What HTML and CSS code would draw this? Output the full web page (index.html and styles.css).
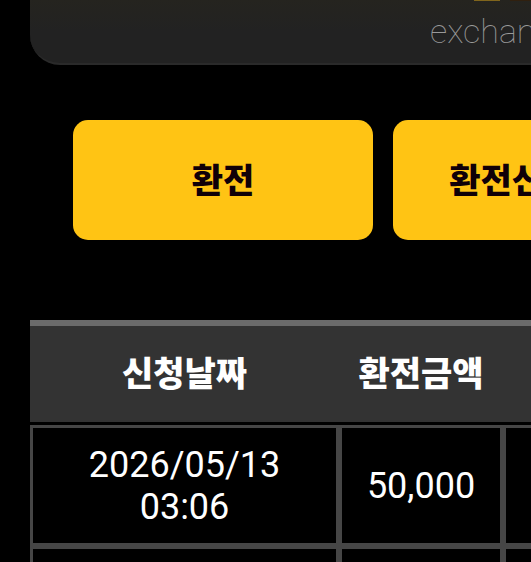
FILE: index.html
```html
<!DOCTYPE html>
<html lang="ko">
<head>
	<meta charset="utf-8">
	<meta name="viewport" content="width=device-width, initial-scale=1">
	<title>환전</title>
	<link rel="stylesheet" href="styles.css">
</head>
<body>
	<div class="banner">
		<div class="banner-mark"><span class="mark-gold"></span><span class="mark-brown"></span></div>
		<p class="banner-sub">exchange</p>
	</div>

	<div class="btns">
		<button type="button" class="btn">환전</button>
		<button type="button" class="btn">환전신청내역</button>
	</div>

	<table class="list">
		<colgroup>
			<col class="col-date">
			<col class="col-money">
			<col class="col-rest">
		</colgroup>
		<thead>
			<tr>
				<th>신청날짜</th>
				<th>환전금액</th>
				<th></th>
			</tr>
		</thead>
		<tbody>
			<tr>
				<td>2026/05/13 03:06</td>
				<td>50,000</td>
				<td></td>
			</tr>
			<tr>
				<td></td>
				<td></td>
				<td></td>
			</tr>
		</tbody>
	</table>
</body>
</html>
```
FILE: styles.css
```css
* {
	box-sizing: border-box;
}
html {
	overflow: hidden;
	background: #000;
}
body {
	margin: 0;
	padding-left: 30px;
	background: #000;
	color: #fff;
	font-family: Roboto, "Noto Sans CJK KR", sans-serif;
	font-size: 36px;
	line-height: 42px;
}

/* top banner */
.banner {
	height: 65px;
	padding-left: 400px;
	overflow: hidden;
	background: linear-gradient(#25241f, #222 50%);
	border-bottom: 2px solid #2a2a2a;
	border-bottom-left-radius: 30px;
}
.banner-mark {
	display: flex;
	gap: 10px;
	height: 1px;
	padding-left: 44px;
}
.mark-gold {
	width: 26px;
	background: #80651c;
}
.mark-brown {
	flex: 1;
	background: #30200f;
}
.banner-sub {
	margin: 9px 0 0;
	color: #999;
	font-size: 34px;
	font-weight: 100;
}

/* buttons */
.btns {
	display: flex;
	gap: 20px;
	padding: 55px 0 80px 43px;
}
.btn {
	flex: none;
	width: 300px;
	height: 120px;
	padding: 0 0 4px;
	border: 0;
	border-radius: 15px;
	background: #ffc414;
	color: #100008;
	font-family: inherit;
	font-size: 34px;
	font-weight: 900;
}

/* request list */
.list {
	width: 100%;
	table-layout: fixed;
	border-collapse: separate;
	border-spacing: 0;
	text-align: center;
}
.col-date {
	width: 309px;
}
.col-money {
	width: 164px;
}
.list th {
	height: 105px;
	padding: 0;
	background: #333;
	background-clip: padding-box;
	border-top: 6px solid #6b6b6b;
	border-bottom: 3px solid #000;
	font-size: 34px;
	font-weight: 900;
	white-space: nowrap;
}
.list td {
	height: 121px;
	padding: 0 40px;
	border: 3px solid #464646;
}
.list td + td {
	padding: 0;
}
.list td:last-child {
	border-right: 0;
}
```
